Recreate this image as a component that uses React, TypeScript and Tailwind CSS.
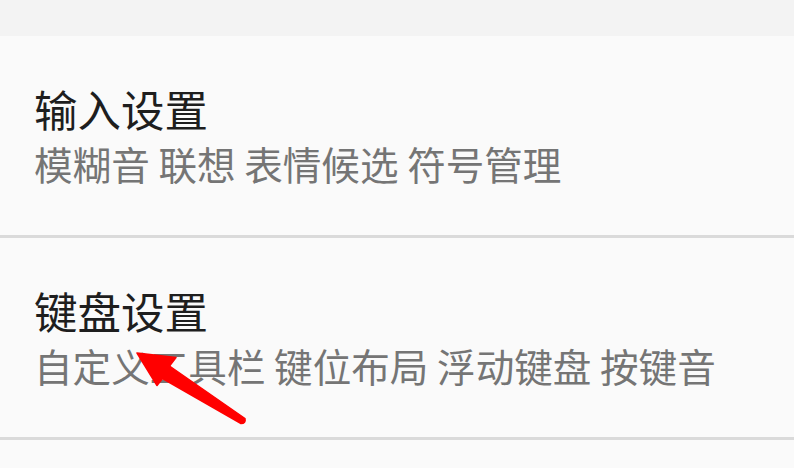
import React from "react";

const font = { fontFamily: '"Noto Sans CJK SC", "Noto Sans", sans-serif' };

function Item({ title, sub }: { title: string; sub: string }) {
  return (
    <div className="h-[199px] bg-[#fafafa] flex flex-col justify-center pl-[34px]">
      <div className="text-[43.5px] leading-[54px] text-[#1e1e1e]">{title}</div>
      <div className="text-[38.6px] leading-[54px] text-[#757575]">{sub}</div>
    </div>
  );
}

export default function App() {
  return (
    <div className="w-[794px] h-[468px] overflow-hidden bg-[#fafafa] relative" style={font}>
      <div className="h-[36px] bg-[#f3f3f3]" />
      <Item title="输入设置" sub="模糊音 联想 表情候选 符号管理" />
      <div className="h-[3px] bg-[#dadada]" />
      <Item title="键盘设置" sub="自定义工具栏 键位布局 浮动键盘 按键音" />
      <div className="h-[3px] bg-[#dadada]" />
      <svg className="absolute left-0 top-0 pointer-events-none" width="794" height="468" viewBox="0 0 794 468">
        <path
          d="M137 353 L176 357.5 L169.5 366 L245 418.5 Q246 423.5 241 423.5 L162.5 378.5 L157 385.5 Z"
          fill="#ff0000"
          stroke="#ff0000"
          strokeWidth="1.5"
          strokeLinejoin="round"
        />
      </svg>
    </div>
  );
}
